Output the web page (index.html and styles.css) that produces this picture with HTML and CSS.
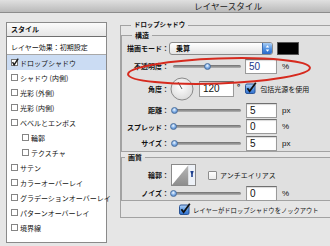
FILE: index.html
```html
<!DOCTYPE html>
<html lang="ja">
<head>
    <meta charset="UTF-8">
    <title>レイヤースタイル</title>
<link rel="stylesheet" href="styles.css">
</head>
<body>
<div class="dialog">
    <div class="titlebar">レイヤースタイル</div>

    <div class="content">
        <div class="styles-list">
            <div class="list-head">スタイル</div>
            <div class="list-default">レイヤー効果：初期設定</div>
            <div class="item selected">
                <svg class="cb-check" width="8" height="9" viewBox="0 0 8 9"><rect x="0.5" y="1.5" width="6" height="6" fill="#fff" stroke="#777"/><path d="M1.6 4.2 L3.1 6.8 L7.2 0.6" fill="none" stroke="#1a1a1a" stroke-width="1.4"/></svg>ドロップシャドウ
            </div>
            <div class="item"><span class="cb"></span>シャドウ (内側)</div>
            <div class="item"><span class="cb"></span>光彩 (外側)</div>
            <div class="item"><span class="cb"></span>光彩 (内側)</div>
            <div class="item"><span class="cb"></span>ベベルとエンボス</div>
            <div class="item sub"><span class="cb"></span>輪郭</div>
            <div class="item sub"><span class="cb"></span>テクスチャ</div>
            <div class="item"><span class="cb"></span>サテン</div>
            <div class="item"><span class="cb"></span>カラーオーバーレイ</div>
            <div class="item"><span class="cb"></span>グラデーションオーバーレイ</div>
            <div class="item"><span class="cb"></span>パターンオーバーレイ</div>
            <div class="item"><span class="cb"></span>境界線</div>
        </div>

        <div class="panel">
            <fieldset class="group outer">
                <legend>ドロップシャドウ</legend>

                <fieldset class="group struct">
                    <legend>構造</legend>
                    <div class="row h16">
                        <span class="label">描画モード：</span>
                        <div class="select">
                            <span class="select-value">乗算</span>
                            <span class="stepper">
                                <svg width="10" height="11" viewBox="0 0 10 11"><path d="M3 4.5 L5 2 L7 4.5 Z M3 6.5 L5 9 L7 6.5 Z" fill="#fff"/></svg>
                            </span>
                        </div>
                        <span class="swatch"></span>
                    </div>
                    <div class="row h20">
                        <span class="label">不透明度：</span>
                        <div class="slider"><span class="knob" style="left: 50%"></span></div>
                        <span class="num focus">50</span>
                        <span class="unit">%</span>
                    </div>
                    <div class="row h26">
                        <span class="label">角度：</span>
                        <svg class="dial" width="24" height="24" viewBox="0 0 24 24">
                            <defs>
                                <radialGradient id="dialfill" cx="45%" cy="40%" r="60%">
                                    <stop offset="0" stop-color="#ffffff"/>
                                    <stop offset="1" stop-color="#dcdcdc"/>
                                </radialGradient>
                            </defs>
                            <circle cx="12" cy="12" r="11" fill="url(#dialfill)" stroke="#8a8a8a"/>
                            <line x1="12" y1="12" x2="8" y2="5" stroke="#555" stroke-width="1"/>
                        </svg>
                        <span class="num wide">120</span>
                        <span class="deg">°</span>
                        <svg class="check" width="12" height="12" viewBox="0 0 12 12">
                            <defs>
                                <linearGradient id="aqua1" x1="0" y1="0" x2="0" y2="1">
                                    <stop offset="0" stop-color="#b6d4f6"/>
                                    <stop offset="0.5" stop-color="#5f9be4"/>
                                    <stop offset="1" stop-color="#2f6fcf"/>
                                </linearGradient>
                            </defs>
                            <rect x="0.5" y="2" width="9.5" height="9.5" rx="1.5" fill="url(#aqua1)" stroke="#2b5597"/>
                            <path d="M2.4 6.3 L4.6 9.3 L10.8 0.8" fill="none" stroke="#101010" stroke-width="1.8"/>
                        </svg>
                        <span class="check-label">包括光源を使用</span>
                    </div>
                    <div class="row h16">
                        <span class="label">距離：</span>
                        <div class="slider"><span class="knob" style="left: 2%"></span></div>
                        <span class="num">5</span>
                        <span class="unit">px</span>
                    </div>
                    <div class="row h17">
                        <span class="label">スプレッド：</span>
                        <div class="slider"><span class="knob" style="left: 0%"></span></div>
                        <span class="num">0</span>
                        <span class="unit">%</span>
                    </div>
                    <div class="row h16">
                        <span class="label">サイズ：</span>
                        <div class="slider"><span class="knob" style="left: 2%"></span></div>
                        <span class="num">5</span>
                        <span class="unit">px</span>
                    </div>
                </fieldset>

                <fieldset class="group quality">
                    <legend>画質</legend>
                    <div class="row h22 first">
                        <span class="label">輪郭：</span>
                        <svg class="contour" width="25" height="22" viewBox="0 0 25 22">
                            <defs>
                                <linearGradient id="cgray" x1="0" y1="0" x2="0" y2="1">
                                    <stop offset="0" stop-color="#b8b8b8"/>
                                    <stop offset="1" stop-color="#8e8e8e"/>
                                </linearGradient>
                            </defs>
                            <rect x="0.5" y="0.5" width="24" height="21" fill="#fff" stroke="#8a8a8a"/>
                            <path d="M1 21 L17.5 1 L17.5 21 Z" fill="url(#cgray)"/>
                            <rect x="17.5" y="1" width="6.5" height="20" fill="#eef2f8"/>
                            <path d="M19.3 7 L22.7 7 L21.8 10 L21.8 13 L20.2 13 L20.2 10 Z" fill="#1d3f8e"/>
                        </svg>
                        <span class="cb-box"></span>
                        <span class="check-label">アンチエイリアス</span>
                    </div>
                    <div class="row h14">
                        <span class="label">ノイズ：</span>
                        <div class="slider"><span class="knob" style="left: 0%"></span></div>
                        <span class="num">0</span>
                        <span class="unit">%</span>
                    </div>
                </fieldset>

                <div class="row h14 knockout">
                    <svg class="check" width="12" height="12" viewBox="0 0 12 12">
                        <defs>
                            <linearGradient id="aqua2" x1="0" y1="0" x2="0" y2="1">
                                <stop offset="0" stop-color="#b6d4f6"/>
                                <stop offset="0.5" stop-color="#5f9be4"/>
                                <stop offset="1" stop-color="#2f6fcf"/>
                            </linearGradient>
                        </defs>
                        <rect x="0.5" y="2" width="9.5" height="9.5" rx="1.5" fill="url(#aqua2)" stroke="#2b5597"/>
                        <path d="M2.4 6.3 L4.6 9.3 L10.8 0.8" fill="none" stroke="#101010" stroke-width="1.8"/>
                    </svg>
                    <span class="check-label">レイヤーがドロップシャドウをノックアウト</span>
                </div>
            </fieldset>
        </div>
    </div>

    <!-- red marker drawn over the opacity row -->
    <svg class="marker" width="210" height="40" viewBox="0 0 210 40">
        <ellipse cx="99" cy="19" rx="91" ry="12.5" transform="rotate(-2 99 19)" fill="none" stroke="#d62a1e" stroke-width="2"/>
    </svg>
</div>
</body>
</html>
```

FILE: styles.css
```css
* {
    box-sizing: border-box;
}

body {
    margin: 0;
    width: 330px;
    height: 246px;
    overflow: hidden;
    background: #e6e6e6;
    font-family: "Noto Sans CJK JP", "Noto Sans", sans-serif;
    font-size: 7px;
    color: #111;
}

.dialog {
    position: relative;
    width: 330px;
    height: 246px;
    overflow: hidden;
}

/* Title bar */
.titlebar {
    height: 13px;
    padding-left: 126px;
    background: linear-gradient(#e0e0e0, #bababa);
    border-bottom: 1px solid #8c8c8c;
    text-align: center;
    font-size: 8.6px;
    line-height: 12px;
    color: #222;
}

.content {
    display: flex;
    align-items: flex-start;
    padding: 7px 0 0 6px;
}

/* Styles list */
.styles-list {
    flex: none;
    width: 101px;
    height: 221px;
    margin-top: 2px;
    background: #fff;
    border: 1px solid #8a8a8a;
}

.list-head {
    height: 14px;
    padding-left: 4px;
    line-height: 13px;
    font-weight: bold;
    background: linear-gradient(#fbfbfb, #e6e6e6);
    border-bottom: 1px solid #6e6e6e;
}

.list-default {
    height: 18px;
    padding: 3px 0 0 4px;
    line-height: 14px;
    border-bottom: 1px solid #a8a8a8;
}

.item {
    display: flex;
    align-items: center;
    height: 15px;
    padding-left: 4px;
    white-space: nowrap;
}

.item.sub {
    padding-left: 15px;
}

.item.selected {
    background: #cbdcf3;
}

.cb {
    flex: none;
    width: 7px;
    height: 7px;
    margin-right: 2px;
    background: #fff;
    border: 1px solid #858585;
}

.cb-check {
    flex: none;
    margin-right: 1px;
    margin-top: -1px;
}

/* Right panel */
.panel {
    flex: none;
    width: 280px;
    margin-left: 13px;
}

fieldset.group {
    margin: 0;
    padding: 0;
    min-width: 0;
    border: 1px solid #a2a2a2;
}

fieldset.group > legend {
    padding: 0 3px;
    line-height: 10px;
    font-weight: bold;
}

.outer {
    width: 260px;
    padding-bottom: 20px;
}

.outer > legend {
    margin-left: 10px;
    font-size: 6.4px;
}

.struct {
    width: 240px;
    margin: 3px 0 0 7px;
    padding: 1px 0 3px 0;
    background: rgba(0, 0, 0, 0.025);
}

.struct > legend {
    margin-left: 10px;
}

.quality {
    width: 240px;
    margin: 8px 0 0 7px;
    padding: 0 0 9px 0;
    background: rgba(0, 0, 0, 0.025);
}

.quality > legend {
    margin-left: 3px;
}

/* Rows */
.row {
    display: flex;
    align-items: center;
    white-space: nowrap;
}

.h14 { height: 14px; }
.h16 { height: 16px; }
.h17 { height: 17px; }
.h20 { height: 20px; }
.h22 { height: 22px; }
.h26 { height: 26px; }

.row.first {
    margin-top: 2px;
}

.label {
    flex: none;
    width: 47px;
    text-align: right;
    font-weight: bold;
}

.select {
    display: flex;
    align-items: center;
    width: 104px;
    height: 13px;
    background: linear-gradient(#ffffff, #e4e4e4);
    border: 1px solid #8b8b8b;
    border-radius: 3px;
    overflow: hidden;
}

.select-value {
    flex: 1;
    padding-left: 6px;
    font-weight: bold;
    line-height: 11px;
}

.stepper {
    display: flex;
    width: 10px;
    height: 11px;
    background: linear-gradient(#a9cdf5, #4c8ee0 55%, #2a68c8);
    border-left: 1px solid #3e6fb4;
}

.swatch {
    width: 22px;
    height: 13px;
    margin-left: 4px;
    background: #000;
    border: 1px solid #555;
}

.slider {
    position: relative;
    flex: none;
    width: 68px;
    height: 3px;
    margin-left: 4px;
    background: linear-gradient(#6f6f6f, #b4b4b4);
    border-radius: 2px;
}

.knob {
    position: absolute;
    top: -2px;
    width: 7px;
    height: 7px;
    margin-left: -3px;
    border-radius: 50%;
    background: radial-gradient(circle at 45% 35%, #f2f8ff 0, #8ab6ea 45%, #3c6fb8 100%);
    border: 1px solid #4a6f9e;
}

.num {
    flex: none;
    width: 31px;
    height: 15px;
    margin-left: 5px;
    padding-left: 3px;
    background: #fff;
    border: 1px solid #9a9a9a;
    border-top-color: #707070;
    box-shadow: inset 0 1px 1px rgba(0, 0, 0, 0.15);
    font-family: "Liberation Sans", Arial, sans-serif;
    font-size: 10px;
    line-height: 13px;
    color: #111;
}

.num.focus {
    width: 32px;
    margin-left: 4px;
    color: #22358a;
}

.num.wide {
    width: 35px;
    height: 16px;
    line-height: 14px;
    margin-left: 5px;
}

.unit {
    margin-left: 5px;
    font-family: "Liberation Sans", Arial, sans-serif;
    font-size: 8px;
}

.dial {
    flex: none;
    margin-left: 1px;
}

.deg {
    align-self: flex-start;
    margin: 5px 0 0 3px;
    font-size: 8px;
    font-weight: bold;
}

.check {
    flex: none;
    margin-left: 5px;
    margin-top: -2px;
}

.check-label {
    margin-left: 3px;
}

.contour {
    flex: none;
    margin-left: 2px;
}

.cb-box {
    flex: none;
    width: 9px;
    height: 9px;
    margin-left: 12px;
    background: linear-gradient(#ffffff, #ececec);
    border: 1px solid #8d8d8d;
    border-radius: 1px;
}

.knockout {
    margin-top: 2px;
    padding-left: 58px;
}

.knockout .check {
    margin-left: 0;
}

.knockout .check-label {
    margin-left: 2px;
    font-size: 6.3px;
}

/* red marker over the opacity row */
.marker {
    position: absolute;
    left: 120px;
    top: 52px;
}
```
